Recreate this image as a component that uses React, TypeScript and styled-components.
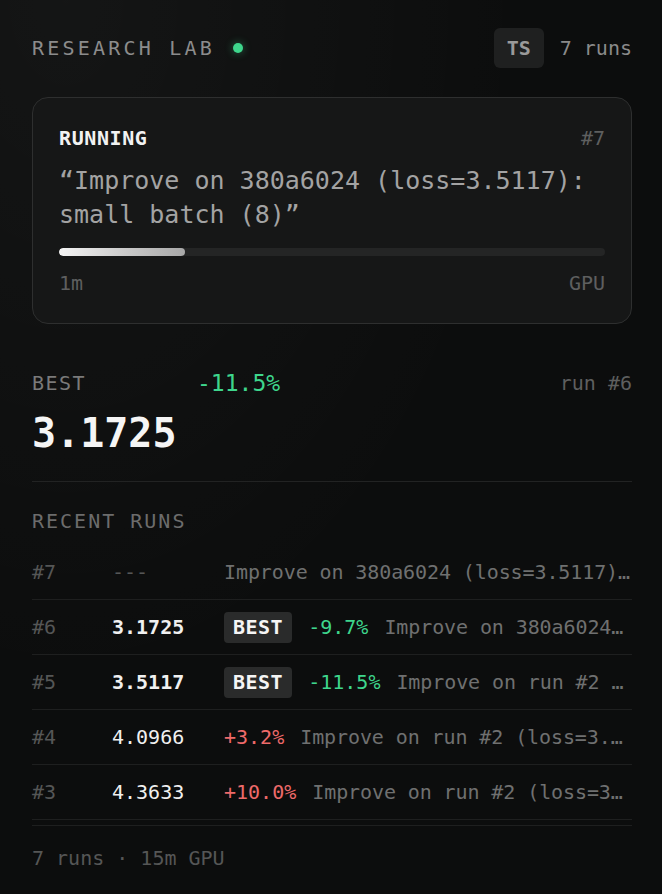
import React from 'react';
import styled, { createGlobalStyle, css } from 'styled-components';

interface Run {
  id: number;
  loss?: string;
  best?: boolean;
  delta?: string;
  note: string;
}

const runs: Run[] = [
  { id: 7, note: 'Improve on 380a6024 (loss=3.5117): small batch (8)' },
  { id: 6, loss: '3.1725', best: true, delta: '-9.7%', note: 'Improve on 380a6024 (loss=3.5117): small batch (8)' },
  { id: 5, loss: '3.5117', best: true, delta: '-11.5%', note: 'Improve on run #2 (loss=3.9683): lower learning rate' },
  { id: 4, loss: '4.0966', delta: '+3.2%', note: 'Improve on run #2 (loss=3.9683): wider model' },
  { id: 3, loss: '4.3633', delta: '+10.0%', note: 'Improve on run #2 (loss=3.9683): more dropout' },
];

const App = () => {
  return (
    <>
      <GlobalStyle />
      <Page>
        <Header>
          <Brand>
            RESEARCH LAB
            <LiveDot />
          </Brand>
          <HeaderRight>
            <Avatar>TS</Avatar>
            <Muted>7 runs</Muted>
          </HeaderRight>
        </Header>

        <RunningCard>
          <CardTop>
            <Status>RUNNING</Status>
            <Dim>#7</Dim>
          </CardTop>
          <Quote>“Improve on 380a6024 (loss=3.5117): small batch (8)”</Quote>
          <Track>
            <Fill style={{ width: '23%' }} />
          </Track>
          <CardTop>
            <Dim>1m</Dim>
            <Dim>GPU</Dim>
          </CardTop>
        </RunningCard>

        <BestBlock>
          <BestTop>
            <BestLabel>BEST</BestLabel>
            <BestDelta>-11.5%</BestDelta>
            <Dim>run #6</Dim>
          </BestTop>
          <BestValue>3.1725</BestValue>
        </BestBlock>

        <SectionTitle>RECENT RUNS</SectionTitle>
        <RunList>
          {runs.map((run) => (
            <RunRow key={run.id}>
              <RunId>#{run.id}</RunId>
              <RunLoss best={!!run.best} pending={!run.loss}>
                {run.loss ?? '---'}
              </RunLoss>
              <RunInfo>
                {run.best && <Badge>BEST</Badge>}
                {run.delta && <Delta up={run.delta.startsWith('+')}>{run.delta}</Delta>}
                <Note>{run.note}</Note>
              </RunInfo>
            </RunRow>
          ))}
        </RunList>

        <Footer>7 runs · 15m GPU</Footer>
      </Page>
    </>
  );
};

export default App;

const GlobalStyle = createGlobalStyle`
  html, body {
    margin: 0;
    background: #0c0d0d;
  }
  body {
    font-family: "DejaVu Sans Mono", "Liberation Mono", monospace;
    font-size: 20px;
    line-height: 24px;
    color: #8a8a8a;
  }
`;

const Page = styled.div`
  width: 662px;
  min-height: 894px;
  box-sizing: border-box;
  padding: 28px 30px 0 32px;
  background:
    radial-gradient(ellipse at 10% 0%, rgba(255, 255, 255, 0.035), transparent 55%),
    #0c0d0d;
`;

const Header = styled.div`
  display: flex;
  align-items: center;
  justify-content: space-between;
  height: 40px;
`;

const Brand = styled.div`
  display: flex;
  align-items: center;
  gap: 18px;
  letter-spacing: 3.2px;
  color: #8c8c8c;
`;

const LiveDot = styled.span`
  width: 10px;
  height: 10px;
  border-radius: 50%;
  background: #3ed68c;
  box-shadow: 0 0 8px rgba(62, 214, 140, 0.45);
`;

const HeaderRight = styled.div`
  display: flex;
  align-items: center;
  gap: 16px;
`;

const Avatar = styled.div`
  width: 50px;
  height: 40px;
  border-radius: 6px;
  background: #1f2020;
  display: flex;
  align-items: center;
  justify-content: center;
  font-weight: bold;
  color: #9a9a9a;
`;

const Muted = styled.span`
  color: #8a8a8a;
`;

const Dim = styled.span`
  color: #5e5f5f;
`;

const RunningCard = styled.div`
  margin-top: 29px;
  padding: 28px 26px 28px;
  border: 1.5px solid #2e2f2f;
  border-radius: 16px;
  background: #161717;
`;

const CardTop = styled.div`
  display: flex;
  justify-content: space-between;
  align-items: center;
`;

const Status = styled.span`
  color: #f2f2f2;
  font-weight: bold;
  letter-spacing: 0.6px;
`;

const Quote = styled.div`
  margin-top: 14px;
  font-size: 25px;
  line-height: 34px;
  color: #a3a3a3;
`;

const Track = styled.div`
  margin: 16px 0 15px;
  height: 8px;
  border-radius: 4px;
  background: #242525;
  overflow: hidden;
`;

const Fill = styled.div`
  height: 100%;
  border-radius: 4px;
  background: linear-gradient(90deg, #f4f4f4 0%, #c8c8c8 55%, #a8a8a8 100%);
`;

const BestBlock = styled.div`
  margin-top: 45px;
  padding-bottom: 24px;
  border-bottom: 1px solid #222323;
`;

const BestTop = styled.div`
  display: flex;
  align-items: center;
  height: 28px;
`;

const BestLabel = styled.span`
  width: 165px;
  letter-spacing: 1.5px;
  color: #7a7a7a;
`;

const BestDelta = styled.span`
  flex: 1;
  font-size: 23px;
  font-weight: 500;
  color: #3ed68c;
`;

const BestValue = styled.div`
  margin-top: 12px;
  font-size: 40px;
  line-height: 48px;
  font-weight: bold;
  color: #f5f5f5;
`;

const SectionTitle = styled.div`
  margin-top: 27px;
  letter-spacing: 2px;
  color: #6c6c6c;
`;

const RunList = styled.div`
  margin-top: 12px;
`;

const RunRow = styled.div`
  display: grid;
  grid-template-columns: 80px 112px minmax(0, 1fr);
  align-items: center;
  height: 54px;
  border-bottom: 1px solid #1e1f1f;
`;

const RunId = styled.span`
  color: #555656;
`;

const RunLoss = styled.span<{ best: boolean; pending: boolean }>`
  color: #f0f0f0;
  ${(props) =>
    props.best &&
    css`
      font-weight: bold;
    `}
  ${(props) =>
    props.pending &&
    css`
      color: #555656;
    `}
`;

const RunInfo = styled.div`
  display: flex;
  align-items: center;
  gap: 16px;
  min-width: 0;
`;

const Badge = styled.span`
  flex-shrink: 0;
  padding: 3px 9px 4px;
  border-radius: 4px;
  background: #2a2b2b;
  color: #f5f5f5;
  font-weight: bold;
  letter-spacing: 0.5px;
`;

const Delta = styled.span<{ up: boolean }>`
  flex-shrink: 0;
  color: #3ed68c;
  ${(props) =>
    props.up &&
    css`
      color: #ee6a6a;
    `}
`;

const Note = styled.span`
  flex: 1;
  min-width: 0;
  white-space: nowrap;
  overflow: hidden;
  text-overflow: ellipsis;
  letter-spacing: -0.1px;
  color: #6f7070;
`;

const Footer = styled.div`
  margin-top: 5px;
  padding-top: 20px;
  border-top: 1px solid #1e1f1f;
  color: #555656;
`;
